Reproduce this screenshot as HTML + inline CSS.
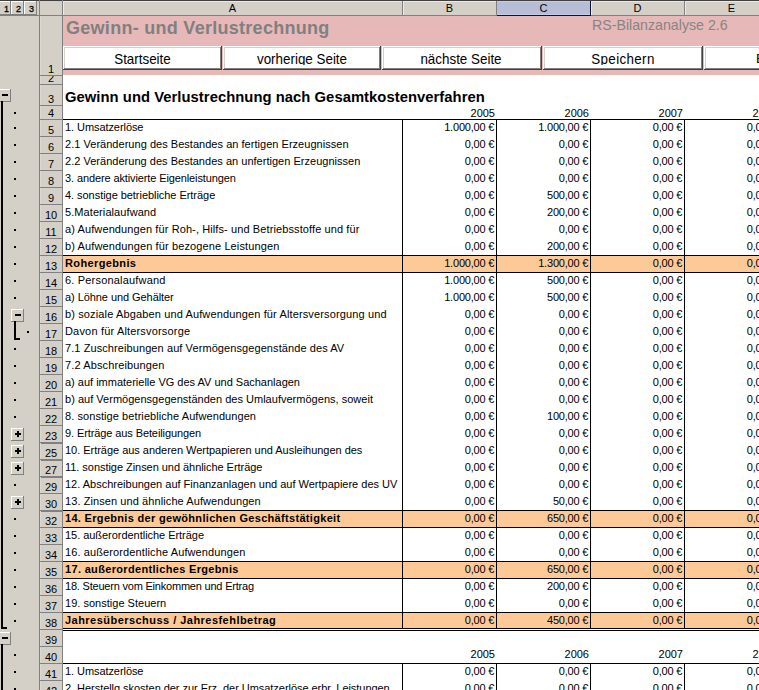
<!DOCTYPE html>
<html><head><meta charset="utf-8"><style>
html,body{margin:0;padding:0;}
body{width:759px;height:690px;overflow:hidden;position:relative;background:#fff;font-family:"Liberation Sans",sans-serif;}
body>div{position:absolute;}
.t{white-space:pre;}
</style></head><body>
<div style="left:0px;top:0px;width:63px;height:690px;background:#d4d0c8;"></div>
<div style="left:0px;top:0px;width:759px;height:16px;background:#d4d0c8;"></div>
<div style="left:0px;top:0px;width:759px;height:1px;background:#404040;"></div>
<div style="left:0px;top:1px;width:11px;height:14px;background:#ffffff;"></div>
<div style="left:0px;top:2px;width:10px;height:12px;background:#d4d0c8;"></div>
<div style="left:10px;top:1px;width:1px;height:14px;background:#808080;"></div>
<div style="left:0px;top:14px;width:11px;height:1px;background:#808080;"></div>
<div class="t" style="left:1px;top:-1px;font-size:9px;line-height:20px;color:#000;width:11px;text-align:center;-webkit-text-stroke:0.3px #000;">1</div>
<div style="left:11px;top:1px;width:13px;height:14px;background:#ffffff;"></div>
<div style="left:12px;top:2px;width:11px;height:12px;background:#d4d0c8;"></div>
<div style="left:23px;top:1px;width:1px;height:14px;background:#808080;"></div>
<div style="left:11px;top:14px;width:13px;height:1px;background:#808080;"></div>
<div class="t" style="left:12px;top:-1px;font-size:9px;line-height:20px;color:#000;width:13px;text-align:center;-webkit-text-stroke:0.3px #000;">2</div>
<div style="left:24px;top:1px;width:13px;height:14px;background:#ffffff;"></div>
<div style="left:25px;top:2px;width:11px;height:12px;background:#d4d0c8;"></div>
<div style="left:36px;top:1px;width:1px;height:14px;background:#808080;"></div>
<div style="left:24px;top:14px;width:13px;height:1px;background:#808080;"></div>
<div class="t" style="left:25px;top:-1px;font-size:9px;line-height:20px;color:#000;width:13px;text-align:center;-webkit-text-stroke:0.3px #000;">3</div>
<div style="left:0px;top:15px;width:39px;height:1px;background:#808080;"></div>
<div style="left:39px;top:0px;width:1px;height:690px;background:#808080;"></div>
<div style="left:62px;top:0px;width:1px;height:690px;background:#808080;"></div>
<div style="left:40px;top:15px;width:719px;height:1px;background:#808080;"></div>
<div style="left:63px;top:1px;width:339px;height:1px;background:#eceae4;"></div>
<div style="left:63px;top:1px;width:1px;height:14px;background:#eceae4;"></div>
<div style="left:402px;top:1px;width:1px;height:15px;background:#808080;"></div>
<div class="t" style="left:63px;top:-2px;font-size:11px;line-height:20px;color:#000;width:339px;text-align:center;">A</div>
<div style="left:403px;top:1px;width:93px;height:1px;background:#eceae4;"></div>
<div style="left:403px;top:1px;width:1px;height:14px;background:#eceae4;"></div>
<div style="left:496px;top:1px;width:1px;height:15px;background:#808080;"></div>
<div class="t" style="left:403px;top:-2px;font-size:11px;line-height:20px;color:#000;width:93px;text-align:center;">B</div>
<div style="left:497px;top:1px;width:93px;height:14px;background:#b7bdd5;"></div>
<div style="left:497px;top:1px;width:93px;height:1px;background:#c9cde0;"></div>
<div style="left:497px;top:14px;width:93px;height:1px;background:#bfcdee;"></div>
<div style="left:497px;top:15px;width:93px;height:1px;background:#0a1040;"></div>
<div style="left:590px;top:1px;width:1px;height:15px;background:#0a1040;"></div>
<div class="t" style="left:497px;top:-2px;font-size:11px;line-height:20px;color:#000;width:93px;text-align:center;">C</div>
<div style="left:591px;top:1px;width:93px;height:1px;background:#eceae4;"></div>
<div style="left:591px;top:1px;width:1px;height:14px;background:#eceae4;"></div>
<div style="left:684px;top:1px;width:1px;height:15px;background:#808080;"></div>
<div class="t" style="left:591px;top:-2px;font-size:11px;line-height:20px;color:#000;width:93px;text-align:center;">D</div>
<div style="left:685px;top:1px;width:93px;height:1px;background:#eceae4;"></div>
<div style="left:685px;top:1px;width:1px;height:14px;background:#eceae4;"></div>
<div style="left:778px;top:1px;width:1px;height:15px;background:#808080;"></div>
<div class="t" style="left:685px;top:-2px;font-size:11px;line-height:20px;color:#000;width:93px;text-align:center;">E</div>
<div style="left:40px;top:16px;width:1px;height:59px;background:#dcd9d2;"></div>
<div style="left:40px;top:75px;width:22px;height:1px;background:#808080;"></div>
<div style="left:40px;top:16px;width:22px;height:59px;overflow:hidden"><div class="t" style="position:absolute;left:0;top:43px;width:22px;text-align:center;font-size:11px;line-height:20px">1</div></div>
<div style="left:40px;top:76px;width:1px;height:8px;background:#dcd9d2;"></div>
<div style="left:40px;top:84px;width:22px;height:1px;background:#808080;"></div>
<div style="left:40px;top:76px;width:22px;height:8px;overflow:hidden"><div class="t" style="position:absolute;left:0;top:-8px;width:22px;text-align:center;font-size:11px;line-height:20px">2</div></div>
<div style="left:40px;top:85px;width:1px;height:20px;background:#dcd9d2;"></div>
<div style="left:40px;top:105px;width:22px;height:1px;background:#808080;"></div>
<div style="left:40px;top:85px;width:22px;height:20px;overflow:hidden"><div class="t" style="position:absolute;left:0;top:4px;width:22px;text-align:center;font-size:11px;line-height:20px">3</div></div>
<div style="left:40px;top:106px;width:1px;height:13px;background:#dcd9d2;"></div>
<div style="left:40px;top:119px;width:22px;height:1px;background:#808080;"></div>
<div style="left:40px;top:106px;width:22px;height:13px;overflow:hidden"><div class="t" style="position:absolute;left:0;top:-3px;width:22px;text-align:center;font-size:11px;line-height:20px">4</div></div>
<div style="left:40px;top:120px;width:1px;height:16px;background:#dcd9d2;"></div>
<div style="left:40px;top:136px;width:22px;height:1px;background:#808080;"></div>
<div style="left:40px;top:120px;width:22px;height:16px;overflow:hidden"><div class="t" style="position:absolute;left:0;top:0px;width:22px;text-align:center;font-size:11px;line-height:20px">5</div></div>
<div style="left:40px;top:137px;width:1px;height:16px;background:#dcd9d2;"></div>
<div style="left:40px;top:153px;width:22px;height:1px;background:#808080;"></div>
<div style="left:40px;top:137px;width:22px;height:16px;overflow:hidden"><div class="t" style="position:absolute;left:0;top:0px;width:22px;text-align:center;font-size:11px;line-height:20px">6</div></div>
<div style="left:40px;top:154px;width:1px;height:16px;background:#dcd9d2;"></div>
<div style="left:40px;top:170px;width:22px;height:1px;background:#808080;"></div>
<div style="left:40px;top:154px;width:22px;height:16px;overflow:hidden"><div class="t" style="position:absolute;left:0;top:0px;width:22px;text-align:center;font-size:11px;line-height:20px">7</div></div>
<div style="left:40px;top:171px;width:1px;height:16px;background:#dcd9d2;"></div>
<div style="left:40px;top:187px;width:22px;height:1px;background:#808080;"></div>
<div style="left:40px;top:171px;width:22px;height:16px;overflow:hidden"><div class="t" style="position:absolute;left:0;top:0px;width:22px;text-align:center;font-size:11px;line-height:20px">8</div></div>
<div style="left:40px;top:188px;width:1px;height:16px;background:#dcd9d2;"></div>
<div style="left:40px;top:204px;width:22px;height:1px;background:#808080;"></div>
<div style="left:40px;top:188px;width:22px;height:16px;overflow:hidden"><div class="t" style="position:absolute;left:0;top:0px;width:22px;text-align:center;font-size:11px;line-height:20px">9</div></div>
<div style="left:40px;top:205px;width:1px;height:16px;background:#dcd9d2;"></div>
<div style="left:40px;top:221px;width:22px;height:1px;background:#808080;"></div>
<div style="left:40px;top:205px;width:22px;height:16px;overflow:hidden"><div class="t" style="position:absolute;left:0;top:0px;width:22px;text-align:center;font-size:11px;line-height:20px">10</div></div>
<div style="left:40px;top:222px;width:1px;height:16px;background:#dcd9d2;"></div>
<div style="left:40px;top:238px;width:22px;height:1px;background:#808080;"></div>
<div style="left:40px;top:222px;width:22px;height:16px;overflow:hidden"><div class="t" style="position:absolute;left:0;top:0px;width:22px;text-align:center;font-size:11px;line-height:20px">11</div></div>
<div style="left:40px;top:239px;width:1px;height:16px;background:#dcd9d2;"></div>
<div style="left:40px;top:255px;width:22px;height:1px;background:#808080;"></div>
<div style="left:40px;top:239px;width:22px;height:16px;overflow:hidden"><div class="t" style="position:absolute;left:0;top:0px;width:22px;text-align:center;font-size:11px;line-height:20px">12</div></div>
<div style="left:40px;top:256px;width:1px;height:16px;background:#dcd9d2;"></div>
<div style="left:40px;top:272px;width:22px;height:1px;background:#808080;"></div>
<div style="left:40px;top:256px;width:22px;height:16px;overflow:hidden"><div class="t" style="position:absolute;left:0;top:0px;width:22px;text-align:center;font-size:11px;line-height:20px">13</div></div>
<div style="left:40px;top:273px;width:1px;height:16px;background:#dcd9d2;"></div>
<div style="left:40px;top:289px;width:22px;height:1px;background:#808080;"></div>
<div style="left:40px;top:273px;width:22px;height:16px;overflow:hidden"><div class="t" style="position:absolute;left:0;top:0px;width:22px;text-align:center;font-size:11px;line-height:20px">14</div></div>
<div style="left:40px;top:290px;width:1px;height:16px;background:#dcd9d2;"></div>
<div style="left:40px;top:306px;width:22px;height:1px;background:#808080;"></div>
<div style="left:40px;top:290px;width:22px;height:16px;overflow:hidden"><div class="t" style="position:absolute;left:0;top:0px;width:22px;text-align:center;font-size:11px;line-height:20px">15</div></div>
<div style="left:40px;top:307px;width:1px;height:16px;background:#dcd9d2;"></div>
<div style="left:40px;top:323px;width:22px;height:1px;background:#808080;"></div>
<div style="left:40px;top:307px;width:22px;height:16px;overflow:hidden"><div class="t" style="position:absolute;left:0;top:0px;width:22px;text-align:center;font-size:11px;line-height:20px">16</div></div>
<div style="left:40px;top:324px;width:1px;height:16px;background:#dcd9d2;"></div>
<div style="left:40px;top:340px;width:22px;height:1px;background:#808080;"></div>
<div style="left:40px;top:324px;width:22px;height:16px;overflow:hidden"><div class="t" style="position:absolute;left:0;top:0px;width:22px;text-align:center;font-size:11px;line-height:20px">17</div></div>
<div style="left:40px;top:341px;width:1px;height:16px;background:#dcd9d2;"></div>
<div style="left:40px;top:357px;width:22px;height:1px;background:#808080;"></div>
<div style="left:40px;top:341px;width:22px;height:16px;overflow:hidden"><div class="t" style="position:absolute;left:0;top:0px;width:22px;text-align:center;font-size:11px;line-height:20px">18</div></div>
<div style="left:40px;top:358px;width:1px;height:16px;background:#dcd9d2;"></div>
<div style="left:40px;top:374px;width:22px;height:1px;background:#808080;"></div>
<div style="left:40px;top:358px;width:22px;height:16px;overflow:hidden"><div class="t" style="position:absolute;left:0;top:0px;width:22px;text-align:center;font-size:11px;line-height:20px">19</div></div>
<div style="left:40px;top:375px;width:1px;height:16px;background:#dcd9d2;"></div>
<div style="left:40px;top:391px;width:22px;height:1px;background:#808080;"></div>
<div style="left:40px;top:375px;width:22px;height:16px;overflow:hidden"><div class="t" style="position:absolute;left:0;top:0px;width:22px;text-align:center;font-size:11px;line-height:20px">20</div></div>
<div style="left:40px;top:392px;width:1px;height:16px;background:#dcd9d2;"></div>
<div style="left:40px;top:408px;width:22px;height:1px;background:#808080;"></div>
<div style="left:40px;top:392px;width:22px;height:16px;overflow:hidden"><div class="t" style="position:absolute;left:0;top:0px;width:22px;text-align:center;font-size:11px;line-height:20px">21</div></div>
<div style="left:40px;top:409px;width:1px;height:16px;background:#dcd9d2;"></div>
<div style="left:40px;top:425px;width:22px;height:1px;background:#808080;"></div>
<div style="left:40px;top:409px;width:22px;height:16px;overflow:hidden"><div class="t" style="position:absolute;left:0;top:0px;width:22px;text-align:center;font-size:11px;line-height:20px">22</div></div>
<div style="left:40px;top:426px;width:1px;height:16px;background:#dcd9d2;"></div>
<div style="left:40px;top:442px;width:22px;height:1px;background:#808080;"></div>
<div style="left:40px;top:443px;width:22px;height:1px;background:#808080;"></div>
<div style="left:40px;top:426px;width:22px;height:16px;overflow:hidden"><div class="t" style="position:absolute;left:0;top:0px;width:22px;text-align:center;font-size:11px;line-height:20px">23</div></div>
<div style="left:40px;top:443px;width:1px;height:16px;background:#dcd9d2;"></div>
<div style="left:40px;top:459px;width:22px;height:1px;background:#808080;"></div>
<div style="left:40px;top:460px;width:22px;height:1px;background:#808080;"></div>
<div style="left:40px;top:443px;width:22px;height:16px;overflow:hidden"><div class="t" style="position:absolute;left:0;top:0px;width:22px;text-align:center;font-size:11px;line-height:20px">25</div></div>
<div style="left:40px;top:460px;width:1px;height:16px;background:#dcd9d2;"></div>
<div style="left:40px;top:476px;width:22px;height:1px;background:#808080;"></div>
<div style="left:40px;top:477px;width:22px;height:1px;background:#808080;"></div>
<div style="left:40px;top:460px;width:22px;height:16px;overflow:hidden"><div class="t" style="position:absolute;left:0;top:0px;width:22px;text-align:center;font-size:11px;line-height:20px">27</div></div>
<div style="left:40px;top:477px;width:1px;height:16px;background:#dcd9d2;"></div>
<div style="left:40px;top:493px;width:22px;height:1px;background:#808080;"></div>
<div style="left:40px;top:477px;width:22px;height:16px;overflow:hidden"><div class="t" style="position:absolute;left:0;top:0px;width:22px;text-align:center;font-size:11px;line-height:20px">29</div></div>
<div style="left:40px;top:494px;width:1px;height:16px;background:#dcd9d2;"></div>
<div style="left:40px;top:510px;width:22px;height:1px;background:#808080;"></div>
<div style="left:40px;top:511px;width:22px;height:1px;background:#808080;"></div>
<div style="left:40px;top:494px;width:22px;height:16px;overflow:hidden"><div class="t" style="position:absolute;left:0;top:0px;width:22px;text-align:center;font-size:11px;line-height:20px">30</div></div>
<div style="left:40px;top:511px;width:1px;height:16px;background:#dcd9d2;"></div>
<div style="left:40px;top:527px;width:22px;height:1px;background:#808080;"></div>
<div style="left:40px;top:511px;width:22px;height:16px;overflow:hidden"><div class="t" style="position:absolute;left:0;top:0px;width:22px;text-align:center;font-size:11px;line-height:20px">32</div></div>
<div style="left:40px;top:528px;width:1px;height:16px;background:#dcd9d2;"></div>
<div style="left:40px;top:544px;width:22px;height:1px;background:#808080;"></div>
<div style="left:40px;top:528px;width:22px;height:16px;overflow:hidden"><div class="t" style="position:absolute;left:0;top:0px;width:22px;text-align:center;font-size:11px;line-height:20px">33</div></div>
<div style="left:40px;top:545px;width:1px;height:16px;background:#dcd9d2;"></div>
<div style="left:40px;top:561px;width:22px;height:1px;background:#808080;"></div>
<div style="left:40px;top:545px;width:22px;height:16px;overflow:hidden"><div class="t" style="position:absolute;left:0;top:0px;width:22px;text-align:center;font-size:11px;line-height:20px">34</div></div>
<div style="left:40px;top:562px;width:1px;height:16px;background:#dcd9d2;"></div>
<div style="left:40px;top:578px;width:22px;height:1px;background:#808080;"></div>
<div style="left:40px;top:562px;width:22px;height:16px;overflow:hidden"><div class="t" style="position:absolute;left:0;top:0px;width:22px;text-align:center;font-size:11px;line-height:20px">35</div></div>
<div style="left:40px;top:579px;width:1px;height:16px;background:#dcd9d2;"></div>
<div style="left:40px;top:595px;width:22px;height:1px;background:#808080;"></div>
<div style="left:40px;top:579px;width:22px;height:16px;overflow:hidden"><div class="t" style="position:absolute;left:0;top:0px;width:22px;text-align:center;font-size:11px;line-height:20px">36</div></div>
<div style="left:40px;top:596px;width:1px;height:16px;background:#dcd9d2;"></div>
<div style="left:40px;top:612px;width:22px;height:1px;background:#808080;"></div>
<div style="left:40px;top:596px;width:22px;height:16px;overflow:hidden"><div class="t" style="position:absolute;left:0;top:0px;width:22px;text-align:center;font-size:11px;line-height:20px">37</div></div>
<div style="left:40px;top:613px;width:1px;height:16px;background:#dcd9d2;"></div>
<div style="left:40px;top:629px;width:22px;height:1px;background:#808080;"></div>
<div style="left:40px;top:613px;width:22px;height:16px;overflow:hidden"><div class="t" style="position:absolute;left:0;top:0px;width:22px;text-align:center;font-size:11px;line-height:20px">38</div></div>
<div style="left:40px;top:630px;width:1px;height:16px;background:#dcd9d2;"></div>
<div style="left:40px;top:646px;width:22px;height:1px;background:#808080;"></div>
<div style="left:40px;top:630px;width:22px;height:16px;overflow:hidden"><div class="t" style="position:absolute;left:0;top:0px;width:22px;text-align:center;font-size:11px;line-height:20px">39</div></div>
<div style="left:40px;top:647px;width:1px;height:16px;background:#dcd9d2;"></div>
<div style="left:40px;top:663px;width:22px;height:1px;background:#808080;"></div>
<div style="left:40px;top:647px;width:22px;height:16px;overflow:hidden"><div class="t" style="position:absolute;left:0;top:0px;width:22px;text-align:center;font-size:11px;line-height:20px">40</div></div>
<div style="left:40px;top:664px;width:1px;height:16px;background:#dcd9d2;"></div>
<div style="left:40px;top:680px;width:22px;height:1px;background:#808080;"></div>
<div style="left:40px;top:664px;width:22px;height:16px;overflow:hidden"><div class="t" style="position:absolute;left:0;top:0px;width:22px;text-align:center;font-size:11px;line-height:20px">41</div></div>
<div style="left:40px;top:681px;width:1px;height:16px;background:#dcd9d2;"></div>
<div style="left:40px;top:697px;width:22px;height:1px;background:#808080;"></div>
<div style="left:40px;top:681px;width:22px;height:16px;overflow:hidden"><div class="t" style="position:absolute;left:0;top:0px;width:22px;text-align:center;font-size:11px;line-height:20px">42</div></div>
<div style="left:63px;top:16px;width:696px;height:59px;background:#e6b9b8;"></div>
<div class="t" style="left:66px;top:18px;font-size:18px;font-weight:700;color:#808080;line-height:20px;letter-spacing:0.28px">Gewinn- und Verlustrechnung</div>
<div class="t" style="left:592px;top:15px;font-size:14.2px;line-height:20px;color:#858585;">RS-Bilanzanalyse 2.6</div>
<div style="left:63px;top:46px;width:159px;height:24px;background:#ffffff;"></div>
<div style="left:64px;top:47px;width:157px;height:1px;background:#d4d0c8;"></div>
<div style="left:64px;top:47px;width:1px;height:21px;background:#d4d0c8;"></div>
<div style="left:64px;top:68px;width:157px;height:1px;background:#808080;"></div>
<div style="left:220px;top:47px;width:1px;height:22px;background:#808080;"></div>
<div style="left:63px;top:69px;width:159px;height:1px;background:#404040;"></div>
<div style="left:221px;top:46px;width:1px;height:24px;background:#404040;"></div>
<div style="left:65px;top:48px;width:155px;height:17px;overflow:hidden;"><div class="t" style="position:absolute;left:0;top:1px;width:155px;text-align:center;font-size:13.4px;line-height:20px;transform:translateY(0.6px) scaleY(1.06);">Startseite</div></div>
<div style="left:223px;top:46px;width:158px;height:24px;background:#ffffff;"></div>
<div style="left:224px;top:47px;width:156px;height:1px;background:#d4d0c8;"></div>
<div style="left:224px;top:47px;width:1px;height:21px;background:#d4d0c8;"></div>
<div style="left:224px;top:68px;width:156px;height:1px;background:#808080;"></div>
<div style="left:379px;top:47px;width:1px;height:22px;background:#808080;"></div>
<div style="left:223px;top:69px;width:158px;height:1px;background:#404040;"></div>
<div style="left:380px;top:46px;width:1px;height:24px;background:#404040;"></div>
<div style="left:225px;top:48px;width:154px;height:17px;overflow:hidden;"><div class="t" style="position:absolute;left:0;top:1px;width:154px;text-align:center;font-size:13.4px;line-height:20px;transform:translateY(0.6px) scaleY(1.06);">vorherige Seite</div></div>
<div style="left:382px;top:46px;width:160px;height:24px;background:#ffffff;"></div>
<div style="left:383px;top:47px;width:158px;height:1px;background:#d4d0c8;"></div>
<div style="left:383px;top:47px;width:1px;height:21px;background:#d4d0c8;"></div>
<div style="left:383px;top:68px;width:158px;height:1px;background:#808080;"></div>
<div style="left:540px;top:47px;width:1px;height:22px;background:#808080;"></div>
<div style="left:382px;top:69px;width:160px;height:1px;background:#404040;"></div>
<div style="left:541px;top:46px;width:1px;height:24px;background:#404040;"></div>
<div style="left:384px;top:48px;width:156px;height:17px;overflow:hidden;"><div class="t" style="position:absolute;left:0;top:1px;width:156px;text-align:center;font-size:13.4px;line-height:20px;transform:translateY(0.6px) scaleY(1.06);margin-left:-1px;">nächste Seite</div></div>
<div style="left:543px;top:46px;width:160px;height:24px;background:#ffffff;"></div>
<div style="left:544px;top:47px;width:158px;height:1px;background:#d4d0c8;"></div>
<div style="left:544px;top:47px;width:1px;height:21px;background:#d4d0c8;"></div>
<div style="left:544px;top:68px;width:158px;height:1px;background:#808080;"></div>
<div style="left:701px;top:47px;width:1px;height:22px;background:#808080;"></div>
<div style="left:543px;top:69px;width:160px;height:1px;background:#404040;"></div>
<div style="left:702px;top:46px;width:1px;height:24px;background:#404040;"></div>
<div style="left:545px;top:48px;width:156px;height:17px;overflow:hidden;"><div class="t" style="position:absolute;left:0;top:1px;width:156px;text-align:center;font-size:13.4px;line-height:20px;transform:translateY(0.6px) scaleY(1.06);letter-spacing:0.35px;">Speichern</div></div>
<div style="left:704px;top:46px;width:160px;height:24px;background:#ffffff;"></div>
<div style="left:705px;top:47px;width:158px;height:1px;background:#d4d0c8;"></div>
<div style="left:705px;top:47px;width:1px;height:21px;background:#d4d0c8;"></div>
<div style="left:705px;top:68px;width:158px;height:1px;background:#808080;"></div>
<div style="left:862px;top:47px;width:1px;height:22px;background:#808080;"></div>
<div style="left:704px;top:69px;width:160px;height:1px;background:#404040;"></div>
<div style="left:863px;top:46px;width:1px;height:24px;background:#404040;"></div>
<div style="left:706px;top:48px;width:156px;height:17px;overflow:hidden;"><div class="t" style="position:absolute;left:50px;top:1px;font-size:13.4px;line-height:20px">Bilanz</div></div>
<div class="t" style="left:65px;top:87px;font-size:14.8px;line-height:20px;color:#000;font-weight:700;letter-spacing:0.04px;">Gewinn und Verlustrechnung nach Gesamtkostenverfahren</div>
<div class="t" style="left:403px;top:103px;width:92px;text-align:right;font-size:11px;line-height:20px;">2005</div>
<div class="t" style="left:497px;top:103px;width:92px;text-align:right;font-size:11px;line-height:20px;">2006</div>
<div class="t" style="left:591px;top:103px;width:92px;text-align:right;font-size:11px;line-height:20px;">2007</div>
<div class="t" style="left:685px;top:103px;width:92px;text-align:right;font-size:11px;line-height:20px;">2008</div>
<div class="t" style="left:403px;top:644px;width:92px;text-align:right;font-size:11px;line-height:20px;">2005</div>
<div class="t" style="left:497px;top:644px;width:92px;text-align:right;font-size:11px;line-height:20px;">2006</div>
<div class="t" style="left:591px;top:644px;width:92px;text-align:right;font-size:11px;line-height:20px;">2007</div>
<div class="t" style="left:685px;top:644px;width:92px;text-align:right;font-size:11px;line-height:20px;">2008</div>
<div style="left:63px;top:119px;width:696px;height:1px;background:#000000;"></div>
<div style="left:63px;top:663px;width:696px;height:1px;background:#000000;"></div>
<div style="left:63px;top:510px;width:696px;height:1px;background:#000000;"></div>
<div style="left:63px;top:511px;width:696px;height:16px;background:#fdca97;"></div>
<div style="left:63px;top:527px;width:696px;height:1px;background:#000000;"></div>
<div style="left:63px;top:561px;width:696px;height:1px;background:#000000;"></div>
<div style="left:63px;top:562px;width:696px;height:16px;background:#fdca97;"></div>
<div style="left:63px;top:578px;width:696px;height:1px;background:#000000;"></div>
<div style="left:63px;top:255px;width:696px;height:1px;background:#000000;"></div>
<div style="left:63px;top:256px;width:696px;height:16px;background:#fdca97;"></div>
<div style="left:63px;top:272px;width:696px;height:1px;background:#000000;"></div>
<div style="left:63px;top:612px;width:696px;height:1px;background:#000000;"></div>
<div style="left:63px;top:613px;width:696px;height:16px;background:#fdca97;"></div>
<div style="left:63px;top:629px;width:696px;height:1px;background:#000000;"></div>
<div style="left:63px;top:628px;width:696px;height:1px;background:#000000;"></div>
<div style="left:63px;top:629px;width:696px;height:1px;background:#ffffff;"></div>
<div style="left:63px;top:630px;width:696px;height:1px;background:#000000;"></div>
<div style="left:402px;top:120px;width:1px;height:508px;background:#000000;"></div>
<div style="left:402px;top:664px;width:1px;height:26px;background:#000000;"></div>
<div style="left:496px;top:120px;width:1px;height:508px;background:#000000;"></div>
<div style="left:496px;top:664px;width:1px;height:26px;background:#000000;"></div>
<div style="left:590px;top:120px;width:1px;height:508px;background:#000000;"></div>
<div style="left:590px;top:664px;width:1px;height:26px;background:#000000;"></div>
<div style="left:684px;top:120px;width:1px;height:508px;background:#000000;"></div>
<div style="left:684px;top:664px;width:1px;height:26px;background:#000000;"></div>
<div class="t" style="left:65px;top:117px;font-size:11px;line-height:20px;letter-spacing:-0.071px;">1. Umsatzerlöse</div>
<div class="t" style="left:403px;top:117px;width:91.2px;text-align:right;font-size:11px;line-height:20px;letter-spacing:-0.2px">1.000,00 €</div>
<div class="t" style="left:497px;top:117px;width:91.2px;text-align:right;font-size:11px;line-height:20px;letter-spacing:-0.2px">1.000,00 €</div>
<div class="t" style="left:591px;top:117px;width:91.2px;text-align:right;font-size:11px;line-height:20px;letter-spacing:-0.2px">0,00 €</div>
<div class="t" style="left:685px;top:117px;width:91.2px;text-align:right;font-size:11px;line-height:20px;letter-spacing:-0.2px">0,00 €</div>
<div class="t" style="left:65px;top:134px;font-size:11px;line-height:20px;letter-spacing:0.030px;">2.1 Veränderung des Bestandes an fertigen Erzeugnissen</div>
<div class="t" style="left:403px;top:134px;width:91.2px;text-align:right;font-size:11px;line-height:20px;letter-spacing:-0.2px">0,00 €</div>
<div class="t" style="left:497px;top:134px;width:91.2px;text-align:right;font-size:11px;line-height:20px;letter-spacing:-0.2px">0,00 €</div>
<div class="t" style="left:591px;top:134px;width:91.2px;text-align:right;font-size:11px;line-height:20px;letter-spacing:-0.2px">0,00 €</div>
<div class="t" style="left:685px;top:134px;width:91.2px;text-align:right;font-size:11px;line-height:20px;letter-spacing:-0.2px">0,00 €</div>
<div class="t" style="left:65px;top:151px;font-size:11px;line-height:20px;letter-spacing:0.022px;">2.2 Veränderung des Bestandes an unfertigen Erzeugnissen</div>
<div class="t" style="left:403px;top:151px;width:91.2px;text-align:right;font-size:11px;line-height:20px;letter-spacing:-0.2px">0,00 €</div>
<div class="t" style="left:497px;top:151px;width:91.2px;text-align:right;font-size:11px;line-height:20px;letter-spacing:-0.2px">0,00 €</div>
<div class="t" style="left:591px;top:151px;width:91.2px;text-align:right;font-size:11px;line-height:20px;letter-spacing:-0.2px">0,00 €</div>
<div class="t" style="left:685px;top:151px;width:91.2px;text-align:right;font-size:11px;line-height:20px;letter-spacing:-0.2px">0,00 €</div>
<div class="t" style="left:65px;top:168px;font-size:11px;line-height:20px;letter-spacing:-0.114px;">3. andere aktivierte Eigenleistungen</div>
<div class="t" style="left:403px;top:168px;width:91.2px;text-align:right;font-size:11px;line-height:20px;letter-spacing:-0.2px">0,00 €</div>
<div class="t" style="left:497px;top:168px;width:91.2px;text-align:right;font-size:11px;line-height:20px;letter-spacing:-0.2px">0,00 €</div>
<div class="t" style="left:591px;top:168px;width:91.2px;text-align:right;font-size:11px;line-height:20px;letter-spacing:-0.2px">0,00 €</div>
<div class="t" style="left:685px;top:168px;width:91.2px;text-align:right;font-size:11px;line-height:20px;letter-spacing:-0.2px">0,00 €</div>
<div class="t" style="left:65px;top:185px;font-size:11px;line-height:20px;letter-spacing:-0.045px;">4. sonstige betriebliche Erträge</div>
<div class="t" style="left:403px;top:185px;width:91.2px;text-align:right;font-size:11px;line-height:20px;letter-spacing:-0.2px">0,00 €</div>
<div class="t" style="left:497px;top:185px;width:91.2px;text-align:right;font-size:11px;line-height:20px;letter-spacing:-0.2px">500,00 €</div>
<div class="t" style="left:591px;top:185px;width:91.2px;text-align:right;font-size:11px;line-height:20px;letter-spacing:-0.2px">0,00 €</div>
<div class="t" style="left:685px;top:185px;width:91.2px;text-align:right;font-size:11px;line-height:20px;letter-spacing:-0.2px">0,00 €</div>
<div class="t" style="left:65px;top:202px;font-size:11px;line-height:20px;letter-spacing:0.081px;">5.Materialaufwand</div>
<div class="t" style="left:403px;top:202px;width:91.2px;text-align:right;font-size:11px;line-height:20px;letter-spacing:-0.2px">0,00 €</div>
<div class="t" style="left:497px;top:202px;width:91.2px;text-align:right;font-size:11px;line-height:20px;letter-spacing:-0.2px">200,00 €</div>
<div class="t" style="left:591px;top:202px;width:91.2px;text-align:right;font-size:11px;line-height:20px;letter-spacing:-0.2px">0,00 €</div>
<div class="t" style="left:685px;top:202px;width:91.2px;text-align:right;font-size:11px;line-height:20px;letter-spacing:-0.2px">0,00 €</div>
<div class="t" style="left:65px;top:219px;font-size:11px;line-height:20px;letter-spacing:0.103px;">a) Aufwendungen für Roh-, Hilfs- und Betriebsstoffe und für</div>
<div class="t" style="left:403px;top:219px;width:91.2px;text-align:right;font-size:11px;line-height:20px;letter-spacing:-0.2px">0,00 €</div>
<div class="t" style="left:497px;top:219px;width:91.2px;text-align:right;font-size:11px;line-height:20px;letter-spacing:-0.2px">0,00 €</div>
<div class="t" style="left:591px;top:219px;width:91.2px;text-align:right;font-size:11px;line-height:20px;letter-spacing:-0.2px">0,00 €</div>
<div class="t" style="left:685px;top:219px;width:91.2px;text-align:right;font-size:11px;line-height:20px;letter-spacing:-0.2px">0,00 €</div>
<div class="t" style="left:65px;top:236px;font-size:11px;line-height:20px;letter-spacing:0.118px;">b) Aufwendungen für bezogene Leistungen</div>
<div class="t" style="left:403px;top:236px;width:91.2px;text-align:right;font-size:11px;line-height:20px;letter-spacing:-0.2px">0,00 €</div>
<div class="t" style="left:497px;top:236px;width:91.2px;text-align:right;font-size:11px;line-height:20px;letter-spacing:-0.2px">200,00 €</div>
<div class="t" style="left:591px;top:236px;width:91.2px;text-align:right;font-size:11px;line-height:20px;letter-spacing:-0.2px">0,00 €</div>
<div class="t" style="left:685px;top:236px;width:91.2px;text-align:right;font-size:11px;line-height:20px;letter-spacing:-0.2px">0,00 €</div>
<div class="t" style="left:65px;top:253px;font-size:11px;line-height:20px;letter-spacing:0.375px;font-weight:700;">Rohergebnis</div>
<div class="t" style="left:403px;top:253px;width:91.2px;text-align:right;font-size:11px;line-height:20px;letter-spacing:-0.2px">1.000,00 €</div>
<div class="t" style="left:497px;top:253px;width:91.2px;text-align:right;font-size:11px;line-height:20px;letter-spacing:-0.2px">1.300,00 €</div>
<div class="t" style="left:591px;top:253px;width:91.2px;text-align:right;font-size:11px;line-height:20px;letter-spacing:-0.2px">0,00 €</div>
<div class="t" style="left:685px;top:253px;width:91.2px;text-align:right;font-size:11px;line-height:20px;letter-spacing:-0.2px">0,00 €</div>
<div class="t" style="left:65px;top:270px;font-size:11px;line-height:20px;letter-spacing:0.188px;">6. Personalaufwand</div>
<div class="t" style="left:403px;top:270px;width:91.2px;text-align:right;font-size:11px;line-height:20px;letter-spacing:-0.2px">1.000,00 €</div>
<div class="t" style="left:497px;top:270px;width:91.2px;text-align:right;font-size:11px;line-height:20px;letter-spacing:-0.2px">500,00 €</div>
<div class="t" style="left:591px;top:270px;width:91.2px;text-align:right;font-size:11px;line-height:20px;letter-spacing:-0.2px">0,00 €</div>
<div class="t" style="left:685px;top:270px;width:91.2px;text-align:right;font-size:11px;line-height:20px;letter-spacing:-0.2px">0,00 €</div>
<div class="t" style="left:65px;top:287px;font-size:11px;line-height:20px;letter-spacing:-0.065px;">a) Löhne und Gehälter</div>
<div class="t" style="left:403px;top:287px;width:91.2px;text-align:right;font-size:11px;line-height:20px;letter-spacing:-0.2px">1.000,00 €</div>
<div class="t" style="left:497px;top:287px;width:91.2px;text-align:right;font-size:11px;line-height:20px;letter-spacing:-0.2px">500,00 €</div>
<div class="t" style="left:591px;top:287px;width:91.2px;text-align:right;font-size:11px;line-height:20px;letter-spacing:-0.2px">0,00 €</div>
<div class="t" style="left:685px;top:287px;width:91.2px;text-align:right;font-size:11px;line-height:20px;letter-spacing:-0.2px">0,00 €</div>
<div class="t" style="left:65px;top:304px;font-size:11px;line-height:20px;letter-spacing:0.132px;">b) soziale Abgaben und Aufwendungen für Altersversorgung und</div>
<div class="t" style="left:403px;top:304px;width:91.2px;text-align:right;font-size:11px;line-height:20px;letter-spacing:-0.2px">0,00 €</div>
<div class="t" style="left:497px;top:304px;width:91.2px;text-align:right;font-size:11px;line-height:20px;letter-spacing:-0.2px">0,00 €</div>
<div class="t" style="left:591px;top:304px;width:91.2px;text-align:right;font-size:11px;line-height:20px;letter-spacing:-0.2px">0,00 €</div>
<div class="t" style="left:685px;top:304px;width:91.2px;text-align:right;font-size:11px;line-height:20px;letter-spacing:-0.2px">0,00 €</div>
<div class="t" style="left:65px;top:321px;font-size:11px;line-height:20px;letter-spacing:0.174px;">Davon für Altersvorsorge</div>
<div class="t" style="left:403px;top:321px;width:91.2px;text-align:right;font-size:11px;line-height:20px;letter-spacing:-0.2px">0,00 €</div>
<div class="t" style="left:497px;top:321px;width:91.2px;text-align:right;font-size:11px;line-height:20px;letter-spacing:-0.2px">0,00 €</div>
<div class="t" style="left:591px;top:321px;width:91.2px;text-align:right;font-size:11px;line-height:20px;letter-spacing:-0.2px">0,00 €</div>
<div class="t" style="left:685px;top:321px;width:91.2px;text-align:right;font-size:11px;line-height:20px;letter-spacing:-0.2px">0,00 €</div>
<div class="t" style="left:65px;top:338px;font-size:11px;line-height:20px;letter-spacing:0.086px;">7.1 Zuschreibungen auf Vermögensgegenstände des AV</div>
<div class="t" style="left:403px;top:338px;width:91.2px;text-align:right;font-size:11px;line-height:20px;letter-spacing:-0.2px">0,00 €</div>
<div class="t" style="left:497px;top:338px;width:91.2px;text-align:right;font-size:11px;line-height:20px;letter-spacing:-0.2px">0,00 €</div>
<div class="t" style="left:591px;top:338px;width:91.2px;text-align:right;font-size:11px;line-height:20px;letter-spacing:-0.2px">0,00 €</div>
<div class="t" style="left:685px;top:338px;width:91.2px;text-align:right;font-size:11px;line-height:20px;letter-spacing:-0.2px">0,00 €</div>
<div class="t" style="left:65px;top:355px;font-size:11px;line-height:20px;letter-spacing:0.129px;">7.2 Abschreibungen</div>
<div class="t" style="left:403px;top:355px;width:91.2px;text-align:right;font-size:11px;line-height:20px;letter-spacing:-0.2px">0,00 €</div>
<div class="t" style="left:497px;top:355px;width:91.2px;text-align:right;font-size:11px;line-height:20px;letter-spacing:-0.2px">0,00 €</div>
<div class="t" style="left:591px;top:355px;width:91.2px;text-align:right;font-size:11px;line-height:20px;letter-spacing:-0.2px">0,00 €</div>
<div class="t" style="left:685px;top:355px;width:91.2px;text-align:right;font-size:11px;line-height:20px;letter-spacing:-0.2px">0,00 €</div>
<div class="t" style="left:65px;top:372px;font-size:11px;line-height:20px;letter-spacing:-0.005px;">a) auf immaterielle VG des AV und Sachanlagen</div>
<div class="t" style="left:403px;top:372px;width:91.2px;text-align:right;font-size:11px;line-height:20px;letter-spacing:-0.2px">0,00 €</div>
<div class="t" style="left:497px;top:372px;width:91.2px;text-align:right;font-size:11px;line-height:20px;letter-spacing:-0.2px">0,00 €</div>
<div class="t" style="left:591px;top:372px;width:91.2px;text-align:right;font-size:11px;line-height:20px;letter-spacing:-0.2px">0,00 €</div>
<div class="t" style="left:685px;top:372px;width:91.2px;text-align:right;font-size:11px;line-height:20px;letter-spacing:-0.2px">0,00 €</div>
<div class="t" style="left:65px;top:389px;font-size:11px;line-height:20px;letter-spacing:0.018px;">b) auf Vermögensgegenständen des Umlaufvermögens, soweit</div>
<div class="t" style="left:403px;top:389px;width:91.2px;text-align:right;font-size:11px;line-height:20px;letter-spacing:-0.2px">0,00 €</div>
<div class="t" style="left:497px;top:389px;width:91.2px;text-align:right;font-size:11px;line-height:20px;letter-spacing:-0.2px">0,00 €</div>
<div class="t" style="left:591px;top:389px;width:91.2px;text-align:right;font-size:11px;line-height:20px;letter-spacing:-0.2px">0,00 €</div>
<div class="t" style="left:685px;top:389px;width:91.2px;text-align:right;font-size:11px;line-height:20px;letter-spacing:-0.2px">0,00 €</div>
<div class="t" style="left:65px;top:406px;font-size:11px;line-height:20px;letter-spacing:0.072px;">8. sonstige betriebliche Aufwendungen</div>
<div class="t" style="left:403px;top:406px;width:91.2px;text-align:right;font-size:11px;line-height:20px;letter-spacing:-0.2px">0,00 €</div>
<div class="t" style="left:497px;top:406px;width:91.2px;text-align:right;font-size:11px;line-height:20px;letter-spacing:-0.2px">100,00 €</div>
<div class="t" style="left:591px;top:406px;width:91.2px;text-align:right;font-size:11px;line-height:20px;letter-spacing:-0.2px">0,00 €</div>
<div class="t" style="left:685px;top:406px;width:91.2px;text-align:right;font-size:11px;line-height:20px;letter-spacing:-0.2px">0,00 €</div>
<div class="t" style="left:65px;top:423px;font-size:11px;line-height:20px;letter-spacing:-0.100px;">9. Erträge aus Beteiligungen</div>
<div class="t" style="left:403px;top:423px;width:91.2px;text-align:right;font-size:11px;line-height:20px;letter-spacing:-0.2px">0,00 €</div>
<div class="t" style="left:497px;top:423px;width:91.2px;text-align:right;font-size:11px;line-height:20px;letter-spacing:-0.2px">0,00 €</div>
<div class="t" style="left:591px;top:423px;width:91.2px;text-align:right;font-size:11px;line-height:20px;letter-spacing:-0.2px">0,00 €</div>
<div class="t" style="left:685px;top:423px;width:91.2px;text-align:right;font-size:11px;line-height:20px;letter-spacing:-0.2px">0,00 €</div>
<div class="t" style="left:65px;top:440px;font-size:11px;line-height:20px;letter-spacing:-0.027px;">10. Erträge aus anderen Wertpapieren und Ausleihungen des</div>
<div class="t" style="left:403px;top:440px;width:91.2px;text-align:right;font-size:11px;line-height:20px;letter-spacing:-0.2px">0,00 €</div>
<div class="t" style="left:497px;top:440px;width:91.2px;text-align:right;font-size:11px;line-height:20px;letter-spacing:-0.2px">0,00 €</div>
<div class="t" style="left:591px;top:440px;width:91.2px;text-align:right;font-size:11px;line-height:20px;letter-spacing:-0.2px">0,00 €</div>
<div class="t" style="left:685px;top:440px;width:91.2px;text-align:right;font-size:11px;line-height:20px;letter-spacing:-0.2px">0,00 €</div>
<div class="t" style="left:65px;top:457px;font-size:11px;line-height:20px;letter-spacing:-0.044px;">11. sonstige Zinsen und ähnliche Erträge</div>
<div class="t" style="left:403px;top:457px;width:91.2px;text-align:right;font-size:11px;line-height:20px;letter-spacing:-0.2px">0,00 €</div>
<div class="t" style="left:497px;top:457px;width:91.2px;text-align:right;font-size:11px;line-height:20px;letter-spacing:-0.2px">0,00 €</div>
<div class="t" style="left:591px;top:457px;width:91.2px;text-align:right;font-size:11px;line-height:20px;letter-spacing:-0.2px">0,00 €</div>
<div class="t" style="left:685px;top:457px;width:91.2px;text-align:right;font-size:11px;line-height:20px;letter-spacing:-0.2px">0,00 €</div>
<div class="t" style="left:65px;top:474px;font-size:11px;line-height:20px;letter-spacing:-0.002px;">12. Abschreibungen auf Finanzanlagen und auf Wertpapiere des UV</div>
<div class="t" style="left:403px;top:474px;width:91.2px;text-align:right;font-size:11px;line-height:20px;letter-spacing:-0.2px">0,00 €</div>
<div class="t" style="left:497px;top:474px;width:91.2px;text-align:right;font-size:11px;line-height:20px;letter-spacing:-0.2px">0,00 €</div>
<div class="t" style="left:591px;top:474px;width:91.2px;text-align:right;font-size:11px;line-height:20px;letter-spacing:-0.2px">0,00 €</div>
<div class="t" style="left:685px;top:474px;width:91.2px;text-align:right;font-size:11px;line-height:20px;letter-spacing:-0.2px">0,00 €</div>
<div class="t" style="left:65px;top:491px;font-size:11px;line-height:20px;letter-spacing:0.086px;">13. Zinsen und ähnliche Aufwendungen</div>
<div class="t" style="left:403px;top:491px;width:91.2px;text-align:right;font-size:11px;line-height:20px;letter-spacing:-0.2px">0,00 €</div>
<div class="t" style="left:497px;top:491px;width:91.2px;text-align:right;font-size:11px;line-height:20px;letter-spacing:-0.2px">50,00 €</div>
<div class="t" style="left:591px;top:491px;width:91.2px;text-align:right;font-size:11px;line-height:20px;letter-spacing:-0.2px">0,00 €</div>
<div class="t" style="left:685px;top:491px;width:91.2px;text-align:right;font-size:11px;line-height:20px;letter-spacing:-0.2px">0,00 €</div>
<div class="t" style="left:65px;top:508px;font-size:11px;line-height:20px;letter-spacing:0.313px;font-weight:700;">14. Ergebnis der gewöhnlichen Geschäftstätigkeit</div>
<div class="t" style="left:403px;top:508px;width:91.2px;text-align:right;font-size:11px;line-height:20px;letter-spacing:-0.2px">0,00 €</div>
<div class="t" style="left:497px;top:508px;width:91.2px;text-align:right;font-size:11px;line-height:20px;letter-spacing:-0.2px">650,00 €</div>
<div class="t" style="left:591px;top:508px;width:91.2px;text-align:right;font-size:11px;line-height:20px;letter-spacing:-0.2px">0,00 €</div>
<div class="t" style="left:685px;top:508px;width:91.2px;text-align:right;font-size:11px;line-height:20px;letter-spacing:-0.2px">0,00 €</div>
<div class="t" style="left:65px;top:525px;font-size:11px;line-height:20px;letter-spacing:-0.037px;">15. außerordentliche Erträge</div>
<div class="t" style="left:403px;top:525px;width:91.2px;text-align:right;font-size:11px;line-height:20px;letter-spacing:-0.2px">0,00 €</div>
<div class="t" style="left:497px;top:525px;width:91.2px;text-align:right;font-size:11px;line-height:20px;letter-spacing:-0.2px">0,00 €</div>
<div class="t" style="left:591px;top:525px;width:91.2px;text-align:right;font-size:11px;line-height:20px;letter-spacing:-0.2px">0,00 €</div>
<div class="t" style="left:685px;top:525px;width:91.2px;text-align:right;font-size:11px;line-height:20px;letter-spacing:-0.2px">0,00 €</div>
<div class="t" style="left:65px;top:542px;font-size:11px;line-height:20px;letter-spacing:0.112px;">16. außerordentliche Aufwendungen</div>
<div class="t" style="left:403px;top:542px;width:91.2px;text-align:right;font-size:11px;line-height:20px;letter-spacing:-0.2px">0,00 €</div>
<div class="t" style="left:497px;top:542px;width:91.2px;text-align:right;font-size:11px;line-height:20px;letter-spacing:-0.2px">0,00 €</div>
<div class="t" style="left:591px;top:542px;width:91.2px;text-align:right;font-size:11px;line-height:20px;letter-spacing:-0.2px">0,00 €</div>
<div class="t" style="left:685px;top:542px;width:91.2px;text-align:right;font-size:11px;line-height:20px;letter-spacing:-0.2px">0,00 €</div>
<div class="t" style="left:65px;top:559px;font-size:11px;line-height:20px;letter-spacing:0.331px;font-weight:700;">17. außerordentliches Ergebnis</div>
<div class="t" style="left:403px;top:559px;width:91.2px;text-align:right;font-size:11px;line-height:20px;letter-spacing:-0.2px">0,00 €</div>
<div class="t" style="left:497px;top:559px;width:91.2px;text-align:right;font-size:11px;line-height:20px;letter-spacing:-0.2px">650,00 €</div>
<div class="t" style="left:591px;top:559px;width:91.2px;text-align:right;font-size:11px;line-height:20px;letter-spacing:-0.2px">0,00 €</div>
<div class="t" style="left:685px;top:559px;width:91.2px;text-align:right;font-size:11px;line-height:20px;letter-spacing:-0.2px">0,00 €</div>
<div class="t" style="left:65px;top:576px;font-size:11px;line-height:20px;letter-spacing:-0.206px;">18. Steuern vom Einkommen und Ertrag</div>
<div class="t" style="left:403px;top:576px;width:91.2px;text-align:right;font-size:11px;line-height:20px;letter-spacing:-0.2px">0,00 €</div>
<div class="t" style="left:497px;top:576px;width:91.2px;text-align:right;font-size:11px;line-height:20px;letter-spacing:-0.2px">200,00 €</div>
<div class="t" style="left:591px;top:576px;width:91.2px;text-align:right;font-size:11px;line-height:20px;letter-spacing:-0.2px">0,00 €</div>
<div class="t" style="left:685px;top:576px;width:91.2px;text-align:right;font-size:11px;line-height:20px;letter-spacing:-0.2px">0,00 €</div>
<div class="t" style="left:65px;top:593px;font-size:11px;line-height:20px;letter-spacing:0.016px;">19. sonstige Steuern</div>
<div class="t" style="left:403px;top:593px;width:91.2px;text-align:right;font-size:11px;line-height:20px;letter-spacing:-0.2px">0,00 €</div>
<div class="t" style="left:497px;top:593px;width:91.2px;text-align:right;font-size:11px;line-height:20px;letter-spacing:-0.2px">0,00 €</div>
<div class="t" style="left:591px;top:593px;width:91.2px;text-align:right;font-size:11px;line-height:20px;letter-spacing:-0.2px">0,00 €</div>
<div class="t" style="left:685px;top:593px;width:91.2px;text-align:right;font-size:11px;line-height:20px;letter-spacing:-0.2px">0,00 €</div>
<div class="t" style="left:65px;top:610px;font-size:11px;line-height:20px;letter-spacing:0.465px;font-weight:700;">Jahresüberschuss / Jahresfehlbetrag</div>
<div class="t" style="left:403px;top:610px;width:91.2px;text-align:right;font-size:11px;line-height:20px;letter-spacing:-0.2px">0,00 €</div>
<div class="t" style="left:497px;top:610px;width:91.2px;text-align:right;font-size:11px;line-height:20px;letter-spacing:-0.2px">450,00 €</div>
<div class="t" style="left:591px;top:610px;width:91.2px;text-align:right;font-size:11px;line-height:20px;letter-spacing:-0.2px">0,00 €</div>
<div class="t" style="left:685px;top:610px;width:91.2px;text-align:right;font-size:11px;line-height:20px;letter-spacing:-0.2px">0,00 €</div>
<div class="t" style="left:65px;top:661px;font-size:11px;line-height:20px;letter-spacing:-0.071px;">1. Umsatzerlöse</div>
<div class="t" style="left:403px;top:661px;width:91.2px;text-align:right;font-size:11px;line-height:20px;letter-spacing:-0.2px">0,00 €</div>
<div class="t" style="left:497px;top:661px;width:91.2px;text-align:right;font-size:11px;line-height:20px;letter-spacing:-0.2px">0,00 €</div>
<div class="t" style="left:591px;top:661px;width:91.2px;text-align:right;font-size:11px;line-height:20px;letter-spacing:-0.2px">0,00 €</div>
<div class="t" style="left:685px;top:661px;width:91.2px;text-align:right;font-size:11px;line-height:20px;letter-spacing:-0.2px">0,00 €</div>
<div class="t" style="left:65px;top:678px;font-size:11px;line-height:20px;letter-spacing:-0.045px;">2. Herstellg.skosten der zur Erz. der Umsatzerlöse erbr. Leistungen</div>
<div class="t" style="left:403px;top:678px;width:91.2px;text-align:right;font-size:11px;line-height:20px;letter-spacing:-0.2px">0,00 €</div>
<div class="t" style="left:497px;top:678px;width:91.2px;text-align:right;font-size:11px;line-height:20px;letter-spacing:-0.2px">0,00 €</div>
<div class="t" style="left:591px;top:678px;width:91.2px;text-align:right;font-size:11px;line-height:20px;letter-spacing:-0.2px">0,00 €</div>
<div class="t" style="left:685px;top:678px;width:91.2px;text-align:right;font-size:11px;line-height:20px;letter-spacing:-0.2px">0,00 €</div>
<div style="left:-2px;top:89px;width:13px;height:13px;background:#ffffff;"></div>
<div style="left:-1px;top:90px;width:12px;height:12px;background:#d4d0c8;"></div>
<div style="left:-2px;top:101px;width:13px;height:1px;background:#808080;"></div>
<div style="left:10px;top:89px;width:1px;height:13px;background:#808080;"></div>
<div style="left:2px;top:94px;width:6px;height:2px;background:#000;"></div>
<div style="left:1px;top:101px;width:2px;height:527px;background:#000;"></div>
<div style="left:1px;top:627px;width:6px;height:2px;background:#000;"></div>
<div style="left:-2px;top:632px;width:13px;height:13px;background:#ffffff;"></div>
<div style="left:-1px;top:633px;width:12px;height:12px;background:#d4d0c8;"></div>
<div style="left:-2px;top:644px;width:13px;height:1px;background:#808080;"></div>
<div style="left:10px;top:632px;width:1px;height:13px;background:#808080;"></div>
<div style="left:2px;top:637px;width:6px;height:2px;background:#000;"></div>
<div style="left:1px;top:644px;width:2px;height:46px;background:#000;"></div>
<div style="left:14px;top:112px;width:2px;height:2px;background:#000;"></div>
<div style="left:14px;top:127px;width:2px;height:2px;background:#000;"></div>
<div style="left:14px;top:144px;width:2px;height:2px;background:#000;"></div>
<div style="left:14px;top:161px;width:2px;height:2px;background:#000;"></div>
<div style="left:14px;top:178px;width:2px;height:2px;background:#000;"></div>
<div style="left:14px;top:195px;width:2px;height:2px;background:#000;"></div>
<div style="left:14px;top:212px;width:2px;height:2px;background:#000;"></div>
<div style="left:14px;top:229px;width:2px;height:2px;background:#000;"></div>
<div style="left:14px;top:246px;width:2px;height:2px;background:#000;"></div>
<div style="left:14px;top:263px;width:2px;height:2px;background:#000;"></div>
<div style="left:14px;top:280px;width:2px;height:2px;background:#000;"></div>
<div style="left:14px;top:297px;width:2px;height:2px;background:#000;"></div>
<div style="left:14px;top:348px;width:2px;height:2px;background:#000;"></div>
<div style="left:14px;top:365px;width:2px;height:2px;background:#000;"></div>
<div style="left:14px;top:382px;width:2px;height:2px;background:#000;"></div>
<div style="left:14px;top:399px;width:2px;height:2px;background:#000;"></div>
<div style="left:14px;top:416px;width:2px;height:2px;background:#000;"></div>
<div style="left:14px;top:484px;width:2px;height:2px;background:#000;"></div>
<div style="left:14px;top:518px;width:2px;height:2px;background:#000;"></div>
<div style="left:14px;top:535px;width:2px;height:2px;background:#000;"></div>
<div style="left:14px;top:552px;width:2px;height:2px;background:#000;"></div>
<div style="left:14px;top:569px;width:2px;height:2px;background:#000;"></div>
<div style="left:14px;top:586px;width:2px;height:2px;background:#000;"></div>
<div style="left:14px;top:603px;width:2px;height:2px;background:#000;"></div>
<div style="left:14px;top:620px;width:2px;height:2px;background:#000;"></div>
<div style="left:14px;top:654px;width:2px;height:2px;background:#000;"></div>
<div style="left:14px;top:671px;width:2px;height:2px;background:#000;"></div>
<div style="left:14px;top:688px;width:2px;height:2px;background:#000;"></div>
<div style="left:11px;top:309px;width:13px;height:13px;background:#ffffff;"></div>
<div style="left:12px;top:310px;width:12px;height:12px;background:#d4d0c8;"></div>
<div style="left:11px;top:321px;width:13px;height:1px;background:#808080;"></div>
<div style="left:23px;top:309px;width:1px;height:13px;background:#808080;"></div>
<div style="left:15px;top:314px;width:6px;height:2px;background:#000;"></div>
<div style="left:14px;top:321px;width:2px;height:19px;background:#000;"></div>
<div style="left:14px;top:338px;width:6px;height:2px;background:#000;"></div>
<div style="left:27px;top:331px;width:2px;height:2px;background:#000;"></div>
<div style="left:11px;top:428px;width:13px;height:13px;background:#ffffff;"></div>
<div style="left:12px;top:429px;width:12px;height:12px;background:#d4d0c8;"></div>
<div style="left:11px;top:440px;width:13px;height:1px;background:#808080;"></div>
<div style="left:23px;top:428px;width:1px;height:13px;background:#808080;"></div>
<div style="left:15px;top:433px;width:6px;height:2px;background:#000;"></div>
<div style="left:17px;top:431px;width:2px;height:6px;background:#000;"></div>
<div style="left:11px;top:445px;width:13px;height:13px;background:#ffffff;"></div>
<div style="left:12px;top:446px;width:12px;height:12px;background:#d4d0c8;"></div>
<div style="left:11px;top:457px;width:13px;height:1px;background:#808080;"></div>
<div style="left:23px;top:445px;width:1px;height:13px;background:#808080;"></div>
<div style="left:15px;top:450px;width:6px;height:2px;background:#000;"></div>
<div style="left:17px;top:448px;width:2px;height:6px;background:#000;"></div>
<div style="left:11px;top:462px;width:13px;height:13px;background:#ffffff;"></div>
<div style="left:12px;top:463px;width:12px;height:12px;background:#d4d0c8;"></div>
<div style="left:11px;top:474px;width:13px;height:1px;background:#808080;"></div>
<div style="left:23px;top:462px;width:1px;height:13px;background:#808080;"></div>
<div style="left:15px;top:467px;width:6px;height:2px;background:#000;"></div>
<div style="left:17px;top:465px;width:2px;height:6px;background:#000;"></div>
<div style="left:11px;top:496px;width:13px;height:13px;background:#ffffff;"></div>
<div style="left:12px;top:497px;width:12px;height:12px;background:#d4d0c8;"></div>
<div style="left:11px;top:508px;width:13px;height:1px;background:#808080;"></div>
<div style="left:23px;top:496px;width:1px;height:13px;background:#808080;"></div>
<div style="left:15px;top:501px;width:6px;height:2px;background:#000;"></div>
<div style="left:17px;top:499px;width:2px;height:6px;background:#000;"></div>
</body></html>
